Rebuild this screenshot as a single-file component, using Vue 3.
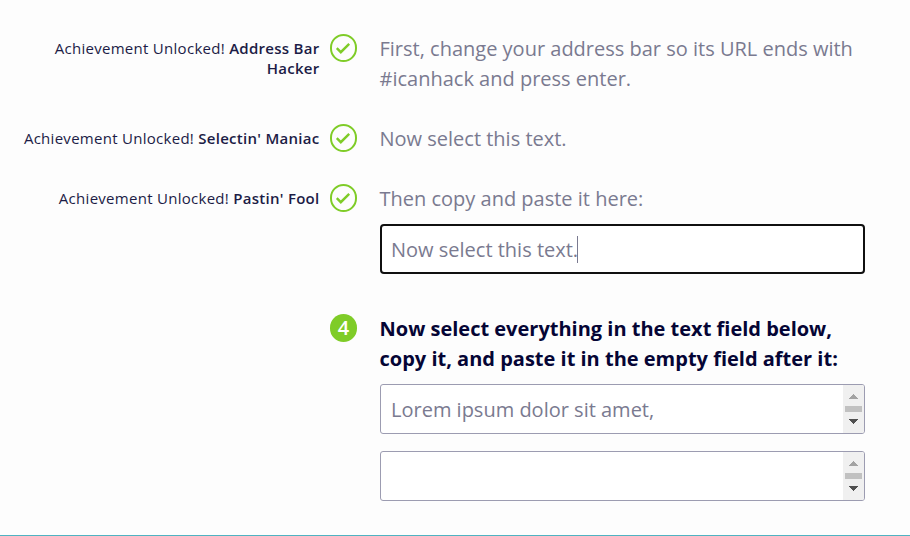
<script setup>
import { ref } from 'vue'

const steps = ref([
    { badge: 'Address Bar Hacker', text: 'First, change your address bar so its URL ends with #icanhack and press enter.', done: true },
    { badge: "Selectin' Maniac", text: 'Now select this text.', done: true },
    { badge: "Pastin' Fool", text: 'Then copy and paste it here:', done: true, input: 'Now select this text.' },
    { text: 'Now select everything in the text field below, copy it, and paste it in the empty field after it:', done: false, areas: ['Lorem ipsum dolor sit amet,', ''] }
])
</script>

<template>
    <div class="tutorial">
        <div class="step" v-for="(step, i) in steps" :key="i" :class="{ current: !step.done }">
            <div class="achievement">
                <template v-if="step.done">Achievement Unlocked! <b>{{ step.badge }}</b></template>
            </div>
            <svg v-if="step.done" class="mark" viewBox="0 0 27 28">
                <rect x="1" y="1" width="25" height="26" rx="12.5" />
                <path class="tick" d="M6.8 14.2l4 4 8.4-8.4" />
            </svg>
            <div v-else class="mark number">{{ i + 1 }}</div>
            <div class="content">
                <p>{{ step.text }}</p>
                <div v-if="step.input" class="field focused">
                    <span class="value">{{ step.input }}</span><span class="caret"></span>
                </div>
                <div v-for="(area, n) in step.areas" :key="n" class="field">
                    <span class="value">{{ area }}</span>
                    <svg class="scrollbar" viewBox="0 0 21 48" shape-rendering="crispEdges">
                        <rect width="21" height="48" fill="#f0f0f0" />
                        <path d="M10 9h1v1h1v1h1v1h1v1h1v1H6v-1h1v-1h1v-1h1v-1h1z" fill="#a3a3a3" />
                        <rect x="2" y="21" width="17" height="6" fill="#c1c1c1" />
                        <path d="M6 34h9v1h-1v1h-1v1h-1v1h-1v1h-1v-1H9v-1H8v-1H7v-1H6z" fill="#505050" />
                    </svg>
                </div>
            </div>
        </div>
    </div>
</template>

<style>
body {
    margin: 0;
    background: #fdfdfd;
}
</style>

<style scoped>
.tutorial {
    box-sizing: border-box;
    height: 536px;
    padding-top: 34px;
    overflow: hidden;
    border-bottom: 1px solid #4fb3c2;
    font-family: "Open Sans", "Noto Sans", sans-serif;
    font-size: 20px;
    line-height: 30px;
    color: #7a7a90;
}

.step {
    display: flex;
    align-items: flex-start;
    margin-bottom: 30px;
}

.step.current {
    margin-top: 40px;
}

.achievement {
    width: 320px;
    box-sizing: border-box;
    padding: 4px 0.5px 0 20px;
    text-align: right;
    font-size: 15px;
    line-height: 20px;
    letter-spacing: 0.28px;
    color: #1c1c46;
}

.achievement b {
    font-weight: 650;
}

.mark {
    flex: none;
    width: 27px;
    height: 28px;
    margin: 0 23px 0 10px;
    fill: none;
    stroke: #7fcc28;
    stroke-width: 2;
}

.mark .tick {
    stroke-width: 2.4;
}

.number {
    border-radius: 14px;
    background: #7fcc28;
    color: #fff;
    font-weight: 600;
    line-height: 28px;
    text-align: center;
}

.content {
    width: 485px;
}

p {
    margin: 0 0 0 -0.5px;
}

.current p {
    color: #050535;
    font-weight: 700;
}

.field {
    display: flex;
    align-items: center;
    box-sizing: border-box;
    height: 50px;
    margin-top: 10px;
    padding-left: 10px;
    border: 1px solid #9c9cb1;
    border-radius: 3px;
    background: #fff;
    overflow: hidden;
}

.field + .field {
    margin-top: 17px;
}

.focused {
    padding-left: 9px;
    border: 2px solid #101010;
    border-radius: 4px;
}

.value {
    padding-top: 2px;
    margin-right: -1px;
    white-space: nowrap;
}

.caret {
    width: 1px;
    height: 27px;
    background: #7a7a90;
}

.scrollbar {
    flex: none;
    width: 21px;
    height: 48px;
    margin-left: auto;
}
</style>
